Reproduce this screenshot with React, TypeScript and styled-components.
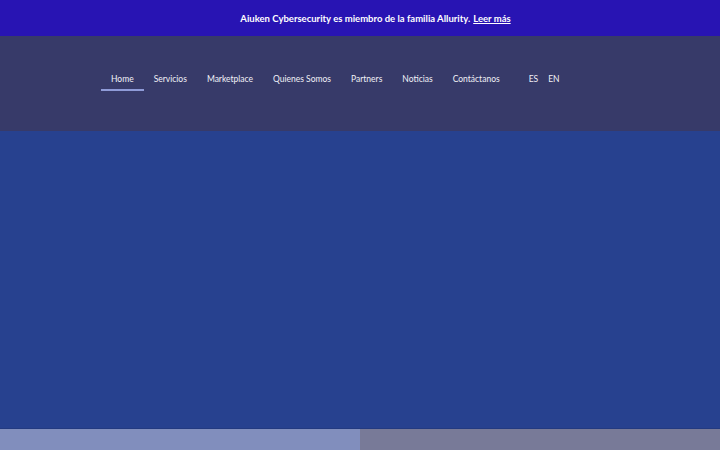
import styled, { createGlobalStyle } from 'styled-components';

const Global = createGlobalStyle`
    html, body {
        margin: 0;
        padding: 0;
        height: 100%;
        overflow: hidden;
    }
    body {
        font-family: 'Lato', 'Noto Sans', sans-serif;
    }
    #root {
        height: 100%;
    }
`;

const Page = styled.div`
    display: flex;
    flex-direction: column;
    width: 720px;
    height: 450px;
`;

const Bandeau = styled.div`
    height: 36px;
    flex: none;
    background-color: #2814b3;
    display: flex;
    align-items: center;
    justify-content: center;
    padding-left: 31px;
    box-sizing: border-box;
    color: #ffffff;
    font-size: 9.5px;
    font-weight: bold;

    a {
        color: #ffffff;
        margin-left: 3px;
        text-decoration: underline;
    }
`;

const Entete = styled.header`
    height: 95px;
    flex: none;
    background-color: #373a69;
    display: flex;
    align-items: flex-start;
    padding: 35px 0 0 101px;
    box-sizing: border-box;
`;

const Menu = styled.nav`
    display: flex;
`;

const Lien = styled.a<{ $actif?: boolean }>`
    padding: 3px 10px 5px;
    color: #f1f1f7;
    font-size: 8.5px;
    text-decoration: none;
    border-bottom: 2px solid ${(p) => (p.$actif ? '#8f9bd8' : 'transparent')};
`;

const Langues = styled.div`
    display: flex;
    gap: 10px;
    margin-left: 19px;
    padding-top: 3px;
    color: #f1f1f7;
    font-size: 8.5px;
`;

const Corps = styled.main`
    flex: 1;
    background-color: #27418f;
    border-bottom: 1px solid #233a80;
`;

const Pied = styled.div`
    height: 21px;
    flex: none;
    display: grid;
    grid-template-columns: 1fr 1fr;
`;

const Bloc = styled.div<{ $couleur: string }>`
    background-color: ${(p) => p.$couleur};
`;

const liens = ['Home', 'Servicios', 'Marketplace', 'Quienes Somos', 'Partners', 'Noticias', 'Contáctanos'];

const App = () => (
    <Page>
        <Global />
        <Bandeau>
            Aiuken Cybersecurity es miembro de la familia Allurity.
            <a href="#">Leer más</a>
        </Bandeau>
        <Entete>
            <Menu>
                {liens.map((l, i) => (
                    <Lien key={l} href="#" $actif={i === 0}>
                        {l}
                    </Lien>
                ))}
            </Menu>
            <Langues>
                <span>ES</span>
                <span>EN</span>
            </Langues>
        </Entete>
        <Corps />
        <Pied>
            <Bloc $couleur="#818ebd" />
            <Bloc $couleur="#787a98" />
        </Pied>
    </Page>
);

export default App;
